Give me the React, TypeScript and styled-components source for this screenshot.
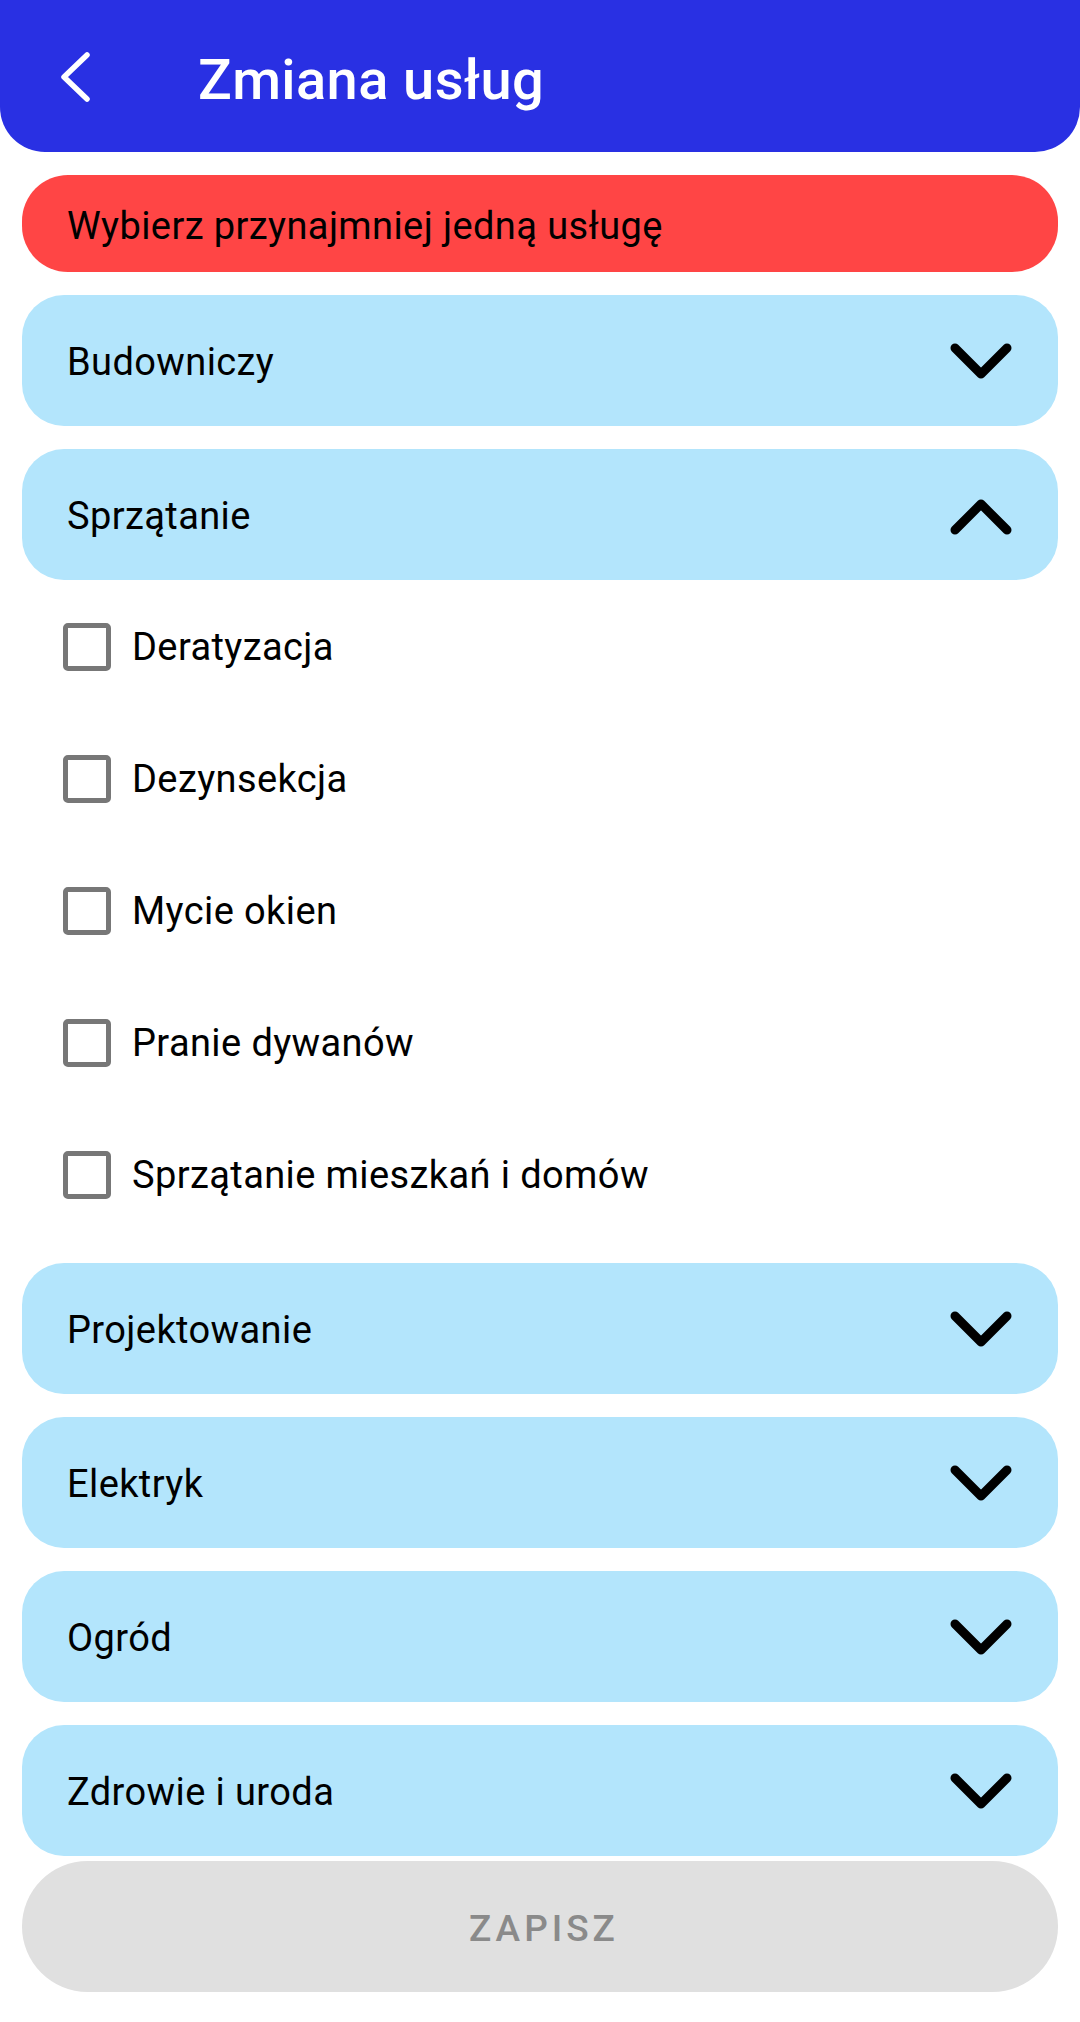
import React from 'react';
import styled, { createGlobalStyle } from 'styled-components';

const GlobalStyle = createGlobalStyle`
  html, body {
    margin: 0;
    padding: 0;
    background: #ffffff;
  }
  body {
    font-family: Roboto, "Noto Sans", sans-serif;
    -webkit-font-smoothing: antialiased;
  }
`;

const Page = styled.div`
  width: 1080px;
  min-height: 2022px;
  background: #ffffff;
`;

const Header = styled.header`
  height: 152px;
  background: #2930e3;
  border-radius: 0 0 45px 45px;
  display: flex;
  align-items: center;
  padding-top: 2px;
  box-sizing: border-box;
`;

const BackButton = styled.button`
  width: 198px;
  height: 100%;
  border: none;
  background: transparent;
  padding: 0 0 0 58px;
  display: flex;
  align-items: center;
  cursor: pointer;
`;

const Title = styled.h1`
  margin: 0;
  color: #ffffff;
  font-family: Roboto, sans-serif;
  font-weight: 500;
  font-size: 56px;
  letter-spacing: 0.4px;
  padding-top: 6px;
`;

const Content = styled.main`
  padding: 23px 22px 0;
  display: flex;
  flex-direction: column;
`;

const List = styled.div`
  display: flex;
  flex-direction: column;
  gap: 23px;
`;

const ErrorBar = styled.div`
  height: 97px;
  border-radius: 46px;
  background: #ff4545;
  display: flex;
  align-items: center;
  padding: 4px 0 0 45px;
  box-sizing: border-box;
  font-size: 38px;
  letter-spacing: 0.4px;
  color: #000000;
`;

const CategoryRow = styled.button`
  width: 100%;
  height: 131px;
  border: none;
  border-radius: 42px;
  background: #b3e5fc;
  display: flex;
  align-items: center;
  justify-content: space-between;
  padding: 3px 45px 0;
  box-sizing: border-box;
  font-family: Roboto, sans-serif;
  font-size: 38px;
  letter-spacing: 0.4px;
  color: #000000;
  cursor: pointer;
`;

const Options = styled.ul`
  list-style: none;
  margin: 0;
  padding: 0;
`;

const Option = styled.li`
  height: 132px;
  display: flex;
  align-items: center;
  padding: 2px 0 0 41px;
  box-sizing: border-box;
  gap: 21px;
  font-size: 38px;
  letter-spacing: 0.4px;
  color: #000000;
`;

const Box = styled.span`
  width: 48px;
  height: 48px;
  box-sizing: border-box;
  border: 5px solid #777777;
  border-radius: 5px;
`;

const SaveButton = styled.button`
  margin-top: 5px;
  height: 131px;
  border: none;
  border-radius: 66px;
  background: #e0e0e0;
  color: #8a8a8a;
  font-family: Roboto, sans-serif;
  font-weight: 500;
  font-size: 37px;
  letter-spacing: 4px;
  text-transform: uppercase;
  padding: 4px 0 0 8px;
`;

const Chevron = ({ up }: { up?: boolean }) => (
  <svg width="62" height="38" viewBox="0 0 62 38" style={{ marginRight: 1 }}>
    <polyline
      points={up ? '5,33 31,7 57,33' : '5,5 31,31 57,5'}
      fill="none"
      stroke="#000"
      strokeWidth="9"
      strokeLinecap="round"
      strokeLinejoin="round"
    />
  </svg>
);

const BackIcon = () => (
  <svg width="34" height="54" viewBox="0 0 34 54">
    <polyline
      points="29,5 6,27 29,49"
      fill="none"
      stroke="#fff"
      strokeWidth="5.5"
      strokeLinecap="round"
      strokeLinejoin="round"
    />
  </svg>
);

const categories = [
  { name: 'Budowniczy' },
  {
    name: 'Sprzątanie',
    open: true,
    options: ['Deratyzacja', 'Dezynsekcja', 'Mycie okien', 'Pranie dywanów', 'Sprzątanie mieszkań i domów'],
  },
  { name: 'Projektowanie' },
  { name: 'Elektryk' },
  { name: 'Ogród' },
  { name: 'Zdrowie i uroda' },
];

export default function App() {
  return (
    <Page>
      <GlobalStyle />
      <Header>
        <BackButton aria-label="Wstecz">
          <BackIcon />
        </BackButton>
        <Title>Zmiana usług</Title>
      </Header>
      <Content>
        <List>
          <ErrorBar>Wybierz przynajmniej jedną usługę</ErrorBar>
          {categories.map((cat) => (
            <div key={cat.name}>
              <CategoryRow>
                <span>{cat.name}</span>
                <Chevron up={cat.open} />
              </CategoryRow>
              {cat.open && cat.options && (
                <Options>
                  {cat.options.map((opt) => (
                    <Option key={opt}>
                      <Box />
                      {opt}
                    </Option>
                  ))}
                </Options>
              )}
            </div>
          ))}
        </List>
        <SaveButton disabled>Zapisz</SaveButton>
      </Content>
    </Page>
  );
}
